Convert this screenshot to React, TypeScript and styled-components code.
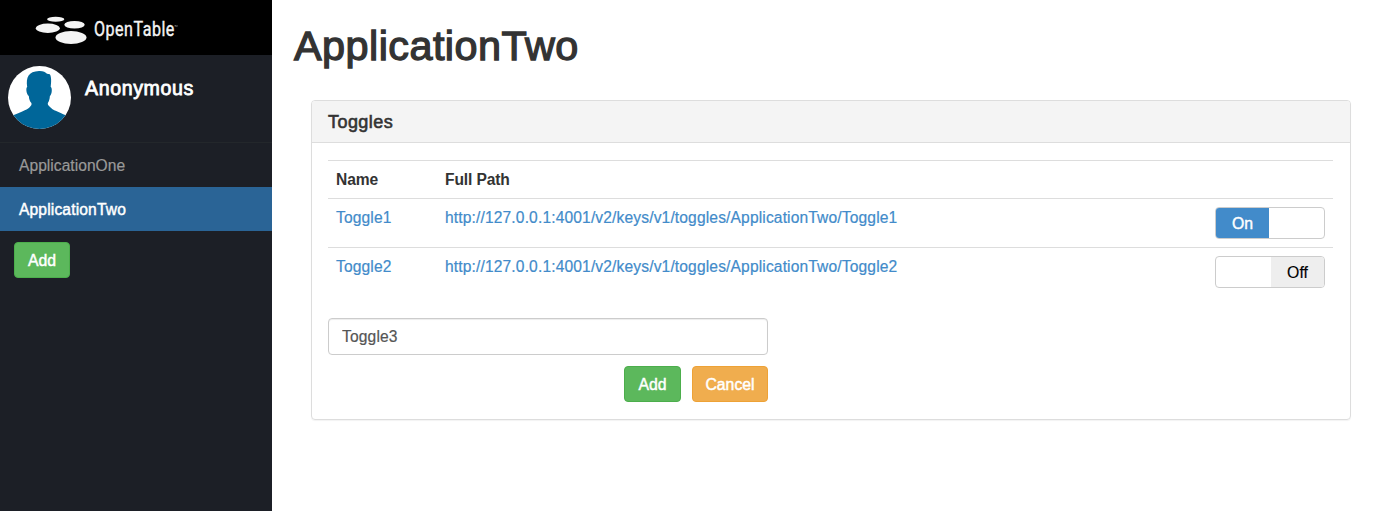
import React, { useState } from "react";
import styled, { createGlobalStyle } from "styled-components";

const GlobalStyle = createGlobalStyle`
  *, *::before, *::after { box-sizing: border-box; }
  body {
    margin: 0;
    background: #fff;
    color: #333;
    font-family: "Liberation Sans", Arial, sans-serif;
    font-size: 15.6px;
    line-height: 21px;
  }
`;

const Page = styled.div`
  display: flex;
  min-height: 100vh;
`;

const Sidebar = styled.aside`
  width: 272px;
  flex: none;
  background: #1c1f26;
`;

const Brand = styled.div`
  height: 55px;
  background: #000;
  padding: 10px 0 0 30px;
  svg { display: block; }
`;

const Profile = styled.div`
  display: flex;
  align-items: flex-start;
  height: 88px;
  padding: 11px 8px 0;
  gap: 14px;
  border-bottom: 1px solid #23272b;
`;

const UserName = styled.div`
  padding-top: 10px;
  font-size: 19.6px;
  line-height: 24px;
  color: #fff;
  -webkit-text-stroke: 0.8px #fff;
  letter-spacing: 0.6px;
`;

const NavItem = styled.a<{ $active?: boolean }>`
  display: block;
  height: 44px;
  padding: 12px 19px;
  text-decoration: none;
  color: ${(p) => (p.$active ? "#fff" : "#999")};
  background: ${(p) => (p.$active ? "#2a6496" : "transparent")};
  letter-spacing: ${(p) => (p.$active ? 0.15 : 0.03)}px;
  -webkit-text-stroke: ${(p) => (p.$active ? "0.45px #fff" : "0.2px #999")};
`;

const SidebarActions = styled.div`
  padding: 11px 14px;
`;

const Button = styled.button<{ $tone: "success" | "warning"; $width: number }>`
  display: inline-block;
  width: ${(p) => p.$width}px;
  height: 36px;
  padding: 0;
  border: 1px solid ${(p) => (p.$tone === "success" ? "#4cae4c" : "#eea236")};
  border-radius: 4px;
  background: ${(p) => (p.$tone === "success" ? "#5cb85c" : "#f0ad4e")};
  color: #fff;
  font: inherit;
  font-size: 15.8px;
  -webkit-text-stroke: 0.45px #fff;
`;

const Main = styled.main`
  flex: 1;
  padding: 24px 33px 0 22px;
`;

const Title = styled.h1`
  margin: 0 0 32px;
  font-size: 41.4px;
  line-height: 44px;
  font-weight: 400;
  letter-spacing: 0.45px;
  -webkit-text-stroke: 1.3px #333;
`;

const Panel = styled.section`
  margin-left: 17px;
  border: 1px solid #ddd;
  border-radius: 4px;
  height: 320px;
  box-shadow: 0 1px 1px rgba(0, 0, 0, 0.05);
`;

const PanelHeader = styled.header`
  height: 42px;
  padding: 11px 16px 10px;
  background: #f4f4f4;
  border-bottom: 1px solid #ddd;
  border-radius: 3px 3px 0 0;
  font-size: 18px;
  letter-spacing: 0.45px;
  line-height: 20px;
  -webkit-text-stroke: 0.6px #333;
`;

const PanelBody = styled.div`
  padding: 17px 17px 0 16px;
`;

const Row = styled.div<{ $head?: boolean }>`
  display: grid;
  grid-template-columns: 109px 1fr auto;
  height: ${(p) => (p.$head ? 38 : 49)}px;
  padding: 8px 8px 0;
  border-top: 1px solid #ddd;
  font-weight: ${(p) => (p.$head ? 700 : 400)};
  letter-spacing: ${(p) => (p.$head ? -0.12 : 0.135)}px;
`;

const Link = styled.a`
  color: #428bca;
  text-decoration: none;
  -webkit-text-stroke: 0.2px #428bca;
`;

const Switch = styled.button<{ $on: boolean }>`
  display: flex;
  justify-content: ${(p) => (p.$on ? "flex-start" : "flex-end")};
  width: 110px;
  height: 32px;
  padding: 0;
  border: 1px solid #ccc;
  border-radius: 4px;
  background: #fff;
  overflow: hidden;
`;

const SwitchSide = styled.span<{ $on: boolean }>`
  width: 53px;
  height: 30px;
  font: 15.8px/32px "Liberation Sans", Arial, sans-serif;
  text-align: center;
  color: ${(p) => (p.$on ? "#fff" : "#000")};
  background: ${(p) => (p.$on ? "#428bca" : "#eee")};
  -webkit-text-stroke: ${(p) => (p.$on ? "0.4px #fff" : "0.15px #000")};
`;

const Form = styled.form`
  width: 440px;
  margin-top: 22px;
`;

const Input = styled.input`
  display: block;
  width: 100%;
  height: 37px;
  padding: 6px 13px;
  border: 1px solid #ccc;
  border-radius: 4px;
  color: #555;
  font: inherit;
  letter-spacing: 0.15px;
  -webkit-text-stroke: 0.2px #555;
  box-shadow: inset 0 1px 1px rgba(0, 0, 0, 0.075);
`;

const FormActions = styled.div`
  display: flex;
  justify-content: flex-end;
  gap: 11px;
  margin-top: 11px;
`;

function Logo() {
  return (
    <svg width="160" height="40" viewBox="30 10 160 40" fill="#f4f4f4">
      <ellipse cx="55.7" cy="19.3" rx="8.6" ry="2.5" />
      <ellipse cx="47.8" cy="28.2" rx="12" ry="4.7" />
      <ellipse cx="74.5" cy="24.8" rx="10.2" ry="3.8" />
      <ellipse cx="71" cy="37.5" rx="15.5" ry="6.5" />
      <g transform="translate(94 36) scale(0.78 1)">
        <text fontFamily="Roboto, sans-serif" fontSize="20.6" textLength="103" lengthAdjust="spacing" stroke="#f4f4f4" strokeWidth="0.4">OpenTable</text>
      </g>
      <path d="M174.6 25.6h1.2M175.2 25.6v1M176.2 26.6v-1l.5.6.5-.6v1" fill="none" stroke="#bbb" strokeWidth="0.5" />
    </svg>
  );
}

function Avatar() {
  return (
    <svg width="63" height="63" viewBox="0 0 63 63">
      <defs>
        <clipPath id="avatar-circle"><circle cx="31.5" cy="31.5" r="31.5" /></clipPath>
      </defs>
      <g clipPath="url(#avatar-circle)">
        <rect width="63" height="63" fill="#fff" />
        <path
          fill="#069"
          d="M19.2 21 C17.8 11 20.5 5.4 31 4.9 C35 4.7 37.5 6 39 7.8 L41.8 8.3 C43.6 11 43.3 16 42.7 21 C44.5 21.5 44 28.5 41.9 30 C41.7 33 41 35.5 39.8 37 C39.6 38.8 40.6 39.8 42 41 C44.5 44 51 46.2 57.8 49.3 L63 63 H0 L5.2 49.3 C12 46.2 18.5 44 21.4 41.4 C23 40 24 38.8 23.4 37 C21.8 35.5 21 33 20.8 30 C18.4 28.5 17.6 21.5 19.2 21 Z"
        />
      </g>
    </svg>
  );
}

const BASE = "http://127.0.0.1:4001/v2/keys/v1/toggles/ApplicationTwo/";

export default function App() {
  const [toggles, setToggles] = useState([
    { name: "Toggle1", on: true },
    { name: "Toggle2", on: false },
  ]);
  const [draft, setDraft] = useState("Toggle3");
  const flip = (name: string) =>
    setToggles((all) => all.map((t) => (t.name === name ? { ...t, on: !t.on } : t)));

  return (
    <Page>
      <GlobalStyle />
      <Sidebar>
        <Brand><Logo /></Brand>
        <Profile>
          <Avatar />
          <UserName>Anonymous</UserName>
        </Profile>
        <nav>
          <NavItem href="#one">ApplicationOne</NavItem>
          <NavItem href="#two" $active>ApplicationTwo</NavItem>
        </nav>
        <SidebarActions>
          <Button $tone="success" $width={56}>Add</Button>
        </SidebarActions>
      </Sidebar>
      <Main>
        <Title>ApplicationTwo</Title>
        <Panel>
          <PanelHeader>Toggles</PanelHeader>
          <PanelBody>
            <Row $head>
              <span>Name</span>
              <span>Full Path</span>
            </Row>
            {toggles.map((t) => (
              <Row key={t.name}>
                <Link href="#toggle">{t.name}</Link>
                <Link href="#path">{BASE + t.name}</Link>
                <Switch type="button" $on={t.on} onClick={() => flip(t.name)}>
                  <SwitchSide $on={t.on}>{t.on ? "On" : "Off"}</SwitchSide>
                </Switch>
              </Row>
            ))}
            <Form onSubmit={(e) => e.preventDefault()}>
              <Input value={draft} onChange={(e) => setDraft(e.target.value)} />
              <FormActions>
                <Button $tone="success" $width={57}>Add</Button>
                <Button $tone="warning" $width={76} type="button" onClick={() => setDraft("")}>Cancel</Button>
              </FormActions>
            </Form>
          </PanelBody>
        </Panel>
      </Main>
    </Page>
  );
}
